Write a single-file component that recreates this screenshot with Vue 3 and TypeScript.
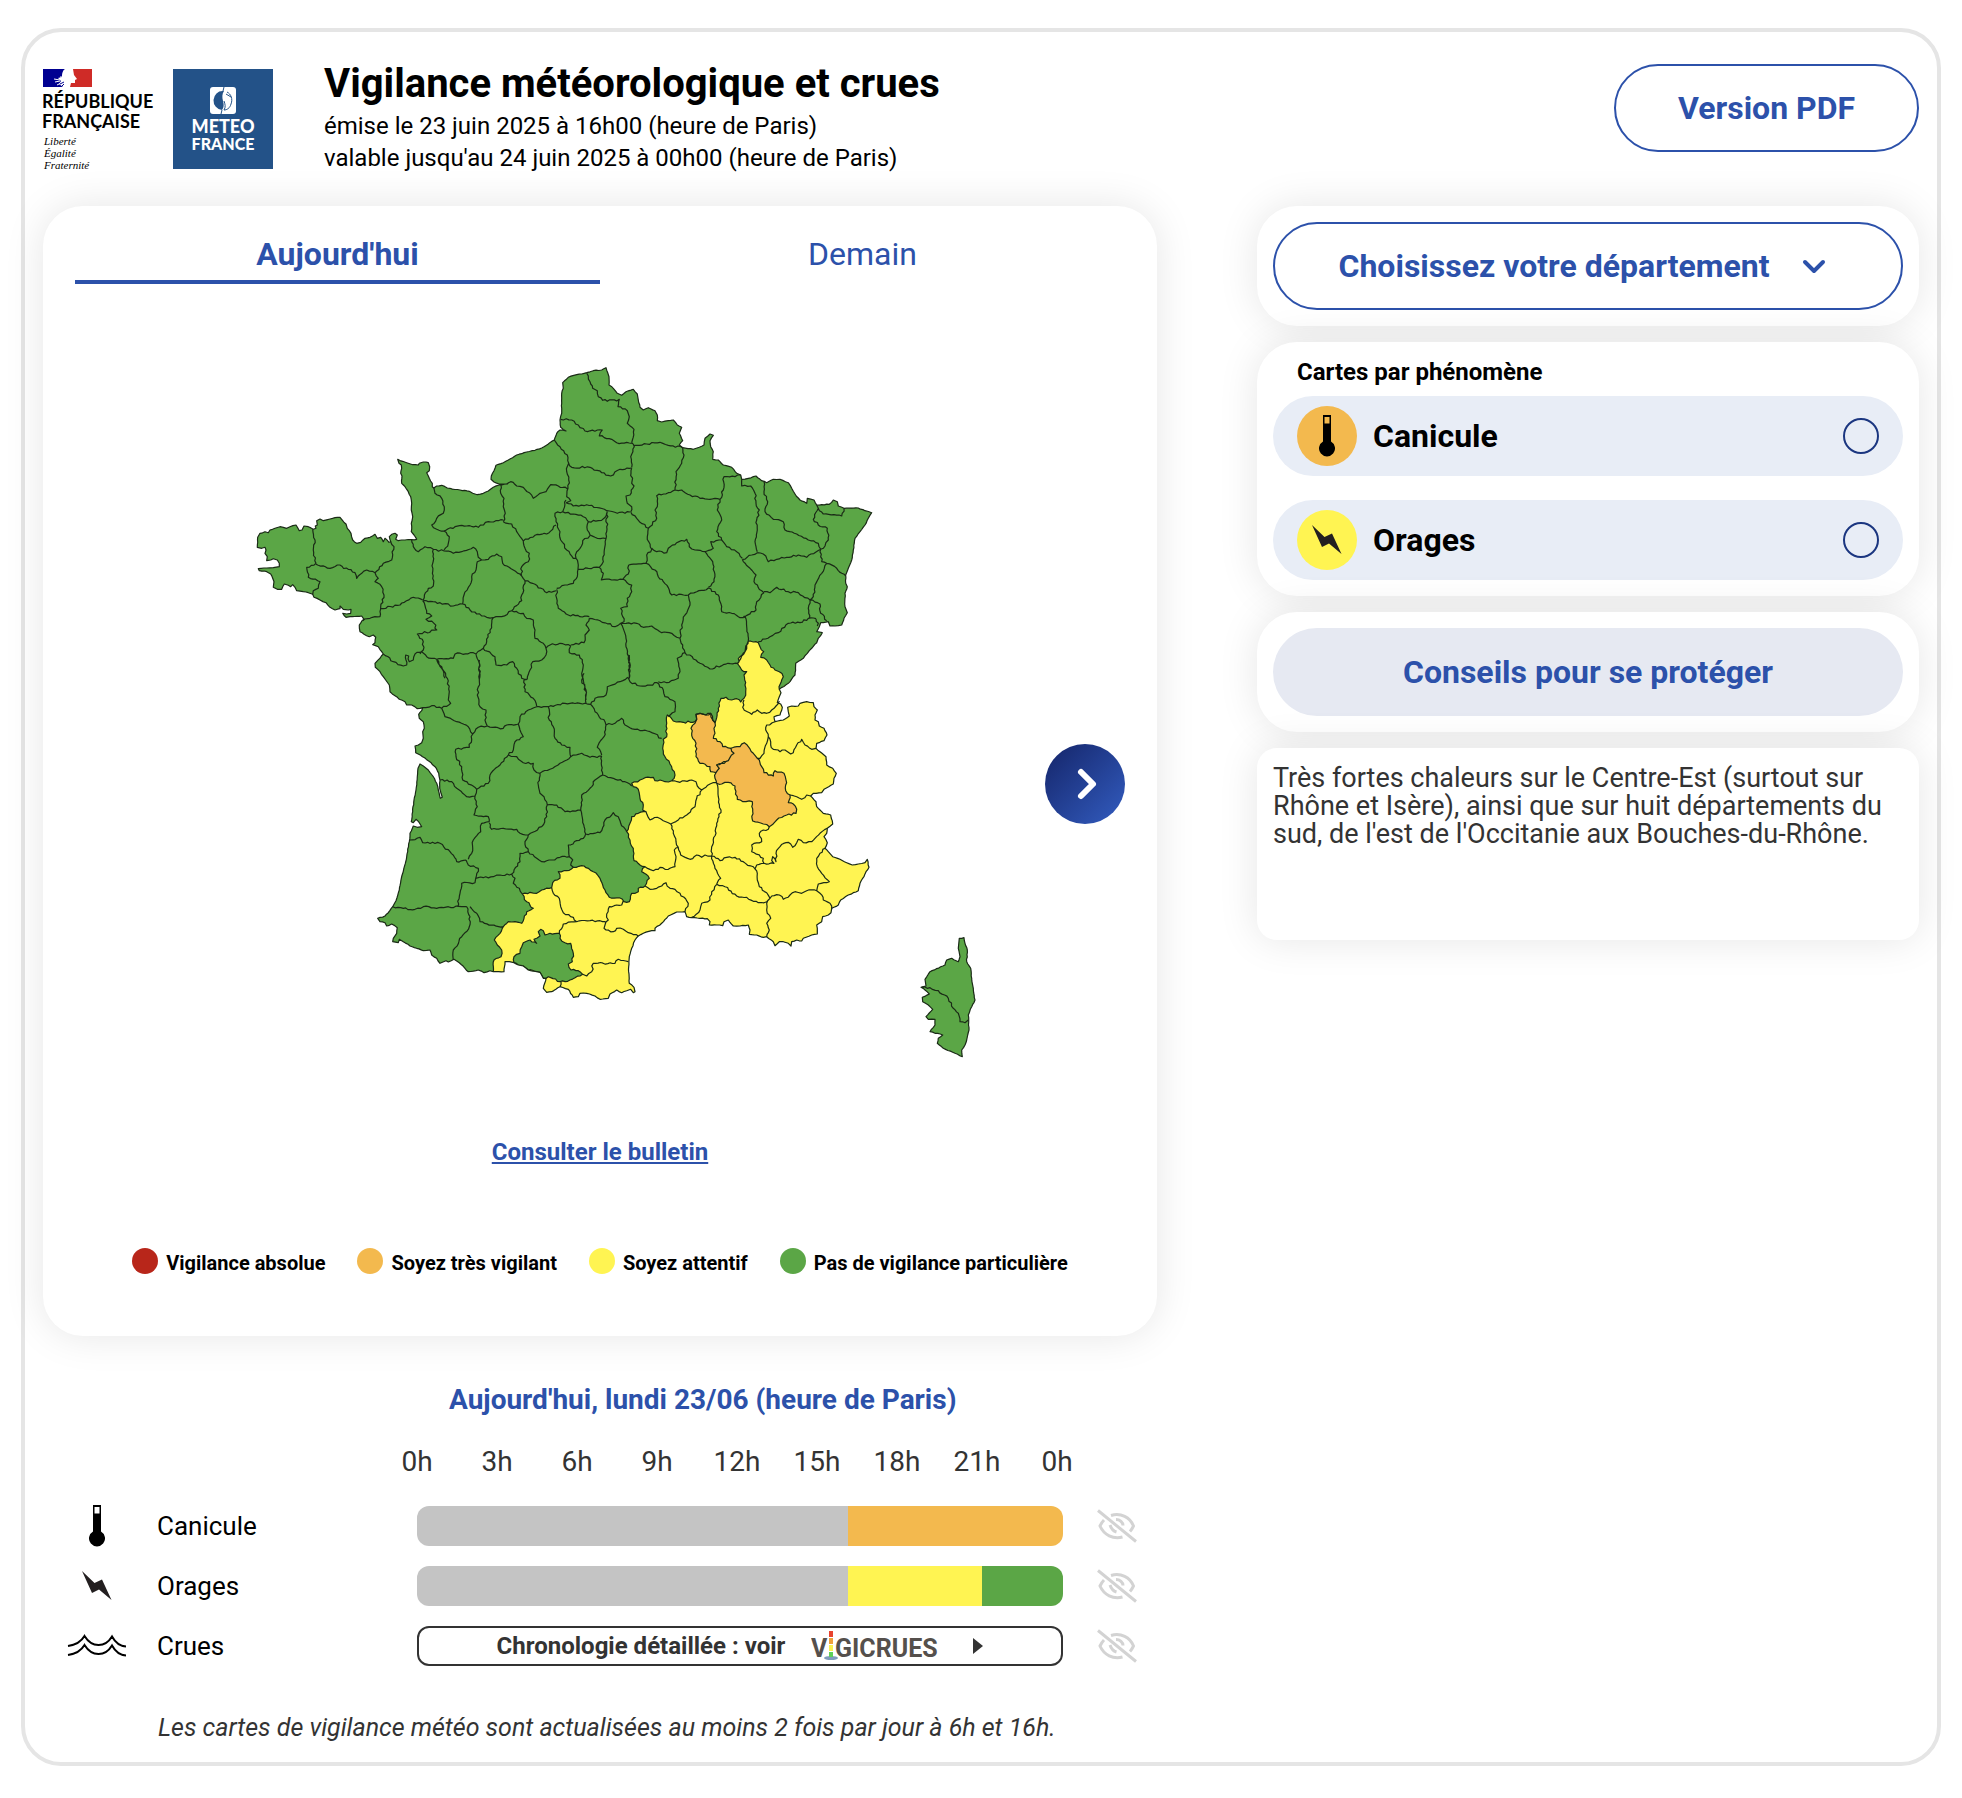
<script setup lang="ts">
import { ref } from 'vue'

type Point = [number, number]

/* ---------- Map geometry ----------
   The country is digitised on four overlapping sheets, at three units per map unit. */
const SHEETS: Record<string, Point> = {
  nw: [240, 350],
  ne: [540, 350],
  sw: [360, 660],
  se: [620, 620],
}

function noise(x: number, y: number): number {
  const n = Math.sin(x * 12.9898 + y * 78.233) * 43758.5453
  return (n - Math.floor(n)) * 2 - 1
}

/* Reads "x,y x,y …" from a sheet, and gives long segments the roughness of a natural border. */
function trace(sheet: string, data: string, rough = 3): Point[] {
  const [ox, oy] = SHEETS[sheet]
  const raw = data.trim().split(/\s+/).map((p) => p.split(',').map(Number) as Point)
  const out: Point[] = []
  raw.forEach(([x, y], i) => {
    out.push([ox + x / 3, oy + y / 3])
    const next = raw[i + 1]
    if (!next) return
    const dx = next[0] - x
    const dy = next[1] - y
    const length = Math.hypot(dx, dy)
    const steps = Math.floor(length / 7)
    for (let s = 1; s < steps; s++) {
      const t = s / steps
      const px = x + dx * t
      const py = y + dy * t
      const k = noise(px, py) * rough
      out.push([ox + (px - (dy / length) * k) / 3, oy + (py + (dx / length) * k) / 3])
    }
  })
  return out
}

function toPath(points: Point[], closed = false): string {
  return 'M' + points.map(([x, y]) => `${x.toFixed(1)},${y.toFixed(1)}`).join('L') + (closed ? 'Z' : '')
}

const coastNe = trace('ne', `43,270 50,250 60,240 78,243 62,232 60,210 65,190 65,130 70,115 68,98 85,82 110,74 140,68 160,62 185,60 198,53 203,68 207,80 207,105 220,115 232,130 245,136 258,125 280,118 292,132 295,150 300,172 310,180 325,173 345,182 352,195 352,212 365,216 385,212 400,210 412,225 425,232 418,250 428,272 418,285 428,293 460,298 478,292 492,285 495,265 510,252 520,256 510,272 512,290 520,305 518,328 535,330 550,345 575,352 590,370 602,375 605,388 625,385 648,378 665,392 680,398 700,388 720,388 745,398 755,415 765,432 780,450 800,460 802,445 822,450 830,465 868,463 880,450 892,455 895,468 912,475 955,474 975,482 995,488 985,505 975,525 960,545 945,565 940,600 935,630 925,655 917,675 917,700 922,710 915,730 915,770 922,788 912,805 905,825 885,828 870,828 865,815 842,818 838,830 830,845 847,848 835,865 830,878 815,895 802,910 790,925 767,940 765,975 745,1000 718,1018`, 1)
const coastNw = trace('nw', `943,270 925,282 905,294 885,301 860,306 830,315 805,330 790,338 768,346 762,362 754,378 753,388 762,396 778,402 800,402 778,405 760,412 745,423 730,430 712,434 698,430 688,424 660,420 622,414 605,406 590,408 581,414 577,410 577,400 568,385 560,368 568,362 569,350 565,338 550,336 538,340 535,345 518,344 500,338 488,334 473,328 477,340 484,345 485,355 482,370 486,378 485,400 495,410 505,425 512,440 515,460 514,480 518,500 514,520 514,545 522,555 530,568 515,569 495,570 475,572 467,568 472,555 465,550 455,553 448,560 452,575 447,577 435,565 430,575 422,562 412,565 405,553 390,562 375,565 362,577 350,580 338,570 333,550 322,535 318,522 308,512 300,502 285,503 270,507 250,512 240,507 230,512 232,525 226,528 228,535 220,538 205,530 192,528 186,540 178,542 168,525 150,530 140,535 120,530 105,535 90,540 85,548 75,545 60,550 53,562 52,592 65,595 75,592 78,600 75,610 82,620 80,632 92,630 100,626 112,630 118,640 118,650 100,653 80,654 55,656 58,662 80,665 92,672 98,685 102,695 100,712 112,718 125,718 133,702 145,706 152,710 158,704 165,712 170,722 190,725 205,728 218,733 222,742 240,750 258,758 270,772 285,780 300,776 300,768 310,778 325,780 333,778 332,790 320,792 308,790 318,802 330,800 365,798 372,808 366,812 358,825 360,845 372,853 388,860 400,855 407,862 405,878 398,884 415,890 425,905 430,912 420,925 405,940 406,952 420,965 430,980 437,990`, 1)
const coastSw = trace('sw', `77,60 88,75 90,95 105,107 118,118 135,125 140,135 155,135 172,146 188,143 185,152 176,163 178,175 190,185 193,205 188,215 190,235 185,248 175,255 165,258 167,278 182,286 205,302 225,320 236,340 240,362 239,385 243,400 247,412 241,415 235,390 230,370 220,350 205,330 190,318 180,312 174,325 172,350 168,390 162,420 158,455 154,485 160,488 168,478 178,488 185,500 172,502 160,498 150,520 148,545 140,590 128,640 118,690 108,722 98,740 85,758 75,768 53,775 60,785 75,788 80,798 95,792 112,803 110,820 100,835 98,845 115,848 118,838 130,845 150,858 170,865 190,872 210,870 215,885 230,895 240,910 258,902 265,906 282,898 298,908 315,925 325,935 355,930 372,938 390,932 400,935 432,935 435,905 448,905 462,908 475,915 490,918 505,930 540,937 550,955 558,955 550,985 560,997 575,995 600,980 625,988 640,1012 655,1010 660,1000 680,1000 705,1008 720,1018 745,1015 750,1002 770,990 785,998 800,992 812,988 820,998 825,995 822,982 808,970 806,920 808,890 815,865 825,840 835,828 850,820 875,812 885,812 885,805 905,790 925,768 950,756 975,755`, 1)
const coastSe = trace('se', `195,875 200,890 215,893 240,895 262,896 270,905 268,915 290,915 308,917 312,905 325,900 340,918 360,918 385,915 390,930 388,943 410,945 430,952 440,950 460,965 465,977 478,965 490,965 505,970 513,978 515,965 530,960 545,963 550,955 575,945 592,942 592,925 590,915 605,905 608,890 625,885 633,878 635,865 655,855 662,840 685,825 715,812 720,790 728,775 738,755 747,742 742,718 735,728 715,732 697,735 680,728 660,718 638,710 625,695 615,685 622,668 612,650 620,640 622,625 638,612 632,585 610,580 590,560 588,545 572,528 580,520 605,518 612,508 640,492 642,475 649,460 638,445 620,435 618,410 600,395 588,385 590,370 612,362 621,345 612,325 598,318 595,305 585,300 585,285 592,270 582,260 580,248 560,245 540,250 535,258 515,258 503,262 505,275 508,288 490,300 465,305 462,290 480,285 487,262 482,252 472,248 478,230 483,218 478,208`, 1)

const mainland = toPath([...coastNw, ...coastSw, ...coastSe, ...coastNe.slice().reverse()], true)

const corsica = toPath(trace('se', `1018,955 1032,953 1035,970 1042,990 1040,1025 1052,1045 1055,1075 1060,1105 1065,1140 1055,1160 1045,1185 1047,1230 1040,1260 1035,1275 1025,1290 1027,1310 1005,1300 970,1285 952,1270 955,1255 968,1245 930,1235 945,1215 945,1198 925,1198 918,1190 938,1168 925,1155 908,1145 907,1132 928,1122 915,1110 903,1102 918,1098 915,1078 930,1055 975,1035 980,1020 995,1015 1015,1025 1020,1010 1015,985`, 1), true)

/* Limit between the green departments and the south-eastern yellow block */
const frontNorth = trace('se', `478,208 485,180 490,170 478,155 465,150 450,135 440,120 422,112 431,95 420,80 415,68 400,66 385,63 380,75 375,95 360,110 352,130 365,150 380,155 372,165 375,195 377,215 372,235 362,246 350,236 335,240 318,232 303,235 295,265 288,300 285,308 278,300 272,280 258,285 240,280 228,283 230,298 225,305 190,307 178,305 160,303 152,292 142,285 140,310 140,350 130,358 128,385 135,410 150,432 163,455 165,465 155,482 135,485 120,480 105,482 100,472 75,473 60,480 35,490 40,500 55,508 60,535 70,555 68,570 78,575 55,580 35,590 30,610 20,635 30,660 40,685 42,722 60,735 75,740 65,755 88,775 75,798 55,805 55,815 35,820 28,845 12,845`)
const frontSouth = trace('sw', `790,722 785,716 748,712 735,690 728,675 720,655 700,635 685,625 665,617 640,622 620,632 595,635 600,655 578,668 575,683 545,690 530,700 510,697 487,702 500,725 520,745 500,755 492,775 485,790 465,785 445,785 430,800 420,820 403,840 412,855 425,870 423,890 402,900 400,935`)
const front = [...frontNorth, ...frontSouth]
const yellowArea = toPath([...front, [490, 1010], [770, 1010], [950, 900], [890, 750], [820, 660]], true)

const ariege = toPath(trace('sw', `598,820 600,835 615,848 632,850 640,880 637,905 625,912 633,930 655,932 668,943 630,960 600,965 565,950 550,955 540,937 505,930 490,918 475,915 462,908 462,890 480,880 485,860 490,848 510,840 530,850 522,838 540,828 535,815 542,808 550,812 555,825 570,820 598,820`), true)

const orangeAreas = [
  `228,283 240,280 258,285 272,280 278,300 285,308 282,325 285,340 280,355 300,365 308,380 333,385 342,400 325,422 305,430 290,435 298,445 288,458 272,455 270,440 240,430 228,410 228,370 218,355 213,325 225,310 230,298 228,283`,
  `373,368 385,380 400,400 412,415 425,440 432,458 460,468 465,452 492,460 498,480 497,512 510,525 505,548 520,552 530,568 528,580 500,585 470,600 448,620 430,612 398,603 397,545 378,545 352,538 345,498 325,487 305,492 290,490 285,475 288,458 298,445 290,435 305,430 325,422 342,400 333,385 360,380 373,368`,
].map((d) => toPath(trace('se', d), true))

const BORDERS: Record<string, string> = {
  nw: `800,403 812,395 830,408 850,412 868,428 880,445 900,430 918,425 932,404 955,408 982,416
783,405 782,430 792,445 790,470 796,490 790,515
581,412 585,430 605,445 613,470 610,490 590,505 575,525 590,538 612,543
612,543 645,530 680,528 715,532 745,515 790,510
612,543 628,560 625,580 612,600
515,569 520,590 535,605 555,590 580,598 612,603
612,603 640,610 665,605 700,592 712,605 715,622 725,630
725,630 745,628 770,612 785,620 788,640 820,660 845,678
790,515 815,522 830,545 850,573
850,573 885,556 920,552 948,525
850,573 855,595 868,610 865,635 845,650 845,678 855,692
580,598 578,640 580,708 565,715 550,750
725,630 712,635 708,660 695,680 690,705 672,735 668,762
550,752 600,758 640,768 668,762
668,762 690,780 710,792 740,802 760,803
760,803 785,800 815,782 845,752 845,735 855,700 855,692
855,692 885,703 920,728 948,722
218,538 225,570 220,600 228,640 200,652 205,682 240,695 235,715 220,722 218,733
228,643 270,655 292,645 325,658 345,668 350,685 365,670 380,660 405,668
452,575 462,590 455,630 430,640 405,668
405,668 415,685 405,695 425,710 432,735 422,770 420,800 390,805 368,812
422,775 480,765 520,742 548,750
548,752 560,790 575,798 558,808 582,820 590,840 532,852 550,875 550,900 540,912
430,912 460,935 490,948 500,945 497,915 506,918 508,935 520,930 525,912 545,905
545,905 560,920 590,928
590,928 640,925 645,912 700,908 708,912
760,803 750,840 740,875 730,895 708,912
815,782 850,790 860,805 880,810 885,840 885,865 910,880 918,895
918,895 918,915 905,930 878,935 870,960 862,988
730,895 765,920 768,945 800,945 818,935 830,955 845,985 862,988
918,895 930,885 960,880 992,888
590,928 605,955 615,985
708,912 718,940 718,988`,
  ne: `140,70 150,95 158,115 172,122 175,140 188,151 230,153 238,148 234,170 262,182 268,200 262,220 282,238 275,278
62,208 95,210 115,225 135,243 187,240 178,258 215,268 230,278 275,280
43,270 60,290 82,315 86,340
275,278 283,290 272,320 275,352
283,286 320,282 360,277 385,286 428,293
86,340 95,352 150,352 185,368 212,378 240,358 275,354
86,340 80,365 86,390 84,415 80,440 92,452 78,458
78,458 100,468 140,464 200,482 232,490 270,486
275,354 275,400 282,408 270,435 258,438 262,460 275,470 272,486
78,450 68,485 45,490 48,515
68,485 100,492 130,500 145,515
145,515 175,512 192,505 202,485
145,515 142,540 150,555 165,562 198,566
202,485 200,530 198,566
150,557 128,572 120,595 110,605 108,625
48,515 60,545 62,570 80,600 100,625 108,625 115,645 114,658
198,566 193,600 190,635 178,652
114,658 145,655 178,652
178,652 190,670 184,690 215,690 248,688 265,672 266,645
266,645 318,640 320,615 335,598 322,560 325,535
272,486 290,505 325,535
325,535 350,505 345,480 352,470 350,437 385,428 405,420
428,293 432,315 425,340 408,365 405,420
405,420 425,420 450,435 480,445 540,448
540,448 550,420 552,380 585,380 602,375
335,595 350,605 380,608 385,595 410,578 440,568 448,590 465,600 495,605
495,605 520,595 512,575 545,570
545,570 530,545 545,510 532,480 540,448
545,570 560,590 590,605 607,625
605,388 605,408 632,408 645,430 648,460 658,480 650,510 652,540 645,575 652,605
607,628 635,615 652,608
672,395 672,425 683,455 675,485 700,508 730,515 735,540 770,552 805,570 835,580 842,598
652,608 670,612 685,635 710,628 740,622 775,615 800,622 842,598
830,465 835,475 820,508 835,525 862,535 865,570 855,588 842,598
835,475 850,492 905,498 912,475
842,598 845,635 860,640 890,655 917,678
860,640 845,670 825,705 820,740 810,750
810,750 775,728 745,725 710,712 690,728 672,725
607,628 630,655 648,675 642,695 665,722 672,728
672,728 650,755 648,780 610,800
495,605 518,635 523,665 522,695 505,712
318,640 345,660 355,680 370,695 388,720 395,735 445,735
445,735 470,725 505,714
505,714 535,735 545,770 545,785 575,790 600,803 618,800
615,800 620,830 625,872
655,875 690,860 715,848 745,820 780,818 805,805 828,806
810,750 805,775 808,805
810,750 840,762 842,790 860,812
828,806 835,820 832,828
625,872 615,905 595,940
592,940 550,944 510,957 480,940 435,908
445,735 450,765 435,795 425,825 420,865
420,865 428,885 435,908
242,820 290,820 310,832 335,828 365,848 395,850 410,862 420,865
250,688 275,705 275,725 262,745 262,770 242,775 252,815 242,820
242,820 225,830 180,812 148,805
148,800 85,795 55,775 50,745 50,718
50,715 75,705 100,700 112,680 114,658
148,805 138,825 148,840 135,855 132,878 92,885
92,888 88,908 118,915 130,945 125,970 135,1010 138,1050
242,820 258,865 258,890 270,940 268,985
435,908 412,925 420,965 415,985 380,998 355,995`,
  sw: `230,0 245,20 262,55 268,95 265,120 272,130 245,145
188,143 215,137 245,145
358,58 352,105 360,140 378,150 375,180 382,198
358,0 358,58
245,145 255,170 290,185 325,200 338,222
338,222 355,202 382,198
382,198 430,205 440,195 475,192
502,58 492,60 495,95 520,115 530,138
475,192 480,170 505,150 530,140
530,140 565,140 615,130 660,130 692,133
672,40 665,60 678,90 678,130
692,133 705,115 738,105 742,80 780,65 803,52
808,-15 808,52
803,52 810,65 840,78 870,75 892,68
892,68 910,90 915,110 945,125 945,155 925,170
738,195 765,190 785,175 795,195 825,208 870,215 905,235
692,133 705,155 735,185 738,195
738,195 732,230 712,262 725,285
565,140 568,180 580,200 585,235 605,255 630,262 632,290
632,290 665,280 690,292 725,288
725,288 728,345
632,290 600,310 570,328 540,340
728,345 760,355 795,365 815,378
728,345 705,360 690,385 665,405 662,450
662,450 615,455 590,435 560,435
540,340 535,375 540,400 552,410 562,435
445,285 470,290 490,308 520,310 522,330 540,340
475,192 480,210 490,230 465,245 460,270 445,285
445,285 420,315 390,345 385,370 350,388
338,222 328,262 287,268 288,290 305,320 308,360 350,388
240,360 275,365 290,385 320,410 345,408
350,388 345,408 352,440 342,465 385,470 388,485
388,488 395,508 430,505 470,508 480,520 505,525
505,525 545,500 560,470 562,435
505,525 495,545 505,575
505,575 530,595 545,605 575,600 600,592 628,590
628,590 625,555 670,535 677,522
662,450 668,480 677,522
677,522 720,518 735,480 760,458 775,470 782,490 800,515
628,590 638,600 632,615 640,622
388,485 365,490 362,515 340,540 335,580 325,598
150,540 180,532 188,548 240,550 270,575 290,605 318,600
318,600 325,615 355,625 347,655
347,655 400,650 420,645 455,642
505,575 480,580 480,605 455,642
455,642 465,655 460,670 478,685 487,702
347,655 345,668 305,670 300,700 293,740
98,740 130,745 165,748 190,740 230,745 265,740 320,740
320,740 330,770 328,800 305,830 280,870 280,900
330,740 350,760 360,785 395,795 430,800
790,722 785,735 748,740 740,762 745,780 735,795 732,805 760,815 770,805 790,808 805,818 835,828
650,785 690,782 735,785 738,790
575,683 580,700 598,715 602,740 610,758 640,772 650,785
650,785 610,792 598,820
668,943 680,948 695,935 700,910 765,910 775,898 805,905
603,965 600,980`,
  se: `372,240 368,262 382,275 395,283 412,270 425,280 440,280 455,270 468,258 478,243
465,305 440,315 437,330 445,350 440,370 432,400 420,415 412,415
445,350 452,375 460,388 480,395 495,390 512,402 520,398 530,375 545,358 555,375 575,388 588,385
510,525 530,530 545,538 560,525 572,528
622,625 600,640 575,665 550,668 535,658 530,668 518,682 512,672 498,668 480,680 468,700 468,725 458,710 455,722 462,730 432,730
448,620 445,628 430,630 418,640 425,665 395,675 395,695 430,715 432,730 410,735 405,747
615,685 600,700 590,715 592,740 605,760 628,785 595,792 590,812
590,812 560,812 545,820 525,815 510,825 490,838 478,825 455,828 450,835
405,747 412,760 412,780 418,800 440,818 450,835
590,812 600,820 610,840 630,850 635,868
450,835 440,850 440,870 452,895 440,910 448,930 440,950
290,793 315,800 350,828 380,832 415,848 440,845 450,835
275,708 300,722 320,712 345,712 370,725 405,747
275,708 285,745 302,775 290,793 275,815 270,840 245,850 240,870 215,892
290,490 295,530 303,570 290,610 288,640 275,680 275,708
288,488 270,492 245,510
155,482 180,487 215,480 228,485 232,498 245,510
245,510 230,535 225,560 200,585 175,600 152,612
78,575 90,600 112,592 130,602 152,612
152,612 160,640 168,665 175,682
175,682 182,705 210,718 230,705 245,712 255,705 275,708
175,682 163,690 168,710 165,740 145,748 120,742 100,752 75,740
75,798 90,808 110,805 125,798 138,788 150,805 165,808 180,820 205,850 195,875
905,1102 930,1103 955,1112 985,1135 1000,1165 1015,1180 1020,1205 1035,1208 1045,1200`,
}

const borders = Object.entries(BORDERS)
  .flatMap(([sheet, lines]) => lines.split('\n').map((line) => toPath(trace(sheet, line))))
  .join('')
const frontLine = toPath(front)

/* ---------- Page data ---------- */
const COLORS = { red: '#b8261a', orange: '#f3b94e', yellow: '#fff452', green: '#5ba646', past: '#c4c4c4' }

const tabs = ["Aujourd'hui", 'Demain']
const activeTab = ref(0)
const phenomenon = ref('')
const department = ref('')

const legend = [
  { label: 'Vigilance absolue', color: COLORS.red },
  { label: 'Soyez très vigilant', color: COLORS.orange },
  { label: 'Soyez attentif', color: COLORS.yellow },
  { label: 'Pas de vigilance particulière', color: COLORS.green },
]
const phenomena = [
  { id: 'canicule', label: 'Canicule', color: COLORS.orange },
  { id: 'orages', label: 'Orages', color: COLORS.yellow },
]
const hours = ['0h', '3h', '6h', '9h', '12h', '15h', '18h', '21h', '0h']
const timelines = [
  { id: 'canicule', label: 'Canicule', parts: [{ h: 16, color: COLORS.past }, { h: 8, color: COLORS.orange }] },
  { id: 'orages', label: 'Orages', parts: [{ h: 16, color: COLORS.past }, { h: 5, color: COLORS.yellow }, { h: 3, color: COLORS.green }] },
  { id: 'crues', label: 'Crues', parts: [] },
]
</script>

<template>
  <main class="frame">
    <header class="top">
      <div class="logos">
        <svg class="logo-rf" viewBox="0 0 118 102" role="img" aria-label="République Française">
          <path fill="#000091" d="M0 0h22c-3 2-3 6-3 8l-4 1 3 3-2 3 4 3H0z" />
          <path fill="#cf2b27" d="M30 0h19v18H27l1-4 4 0 0-3 2-1-3-4z" />
          <path stroke="#fff" stroke-width="1" fill="none" d="M11 10l6 1M12 13l5-1M14 16l6-3M17 8l3 0" />
          <path stroke="#000091" stroke-width="1" fill="none" d="M17 15l4-2M19 17l2-2" />
          <text x="-1" y="39" class="rf-name">RÉPUBLIQUE</text>
          <text x="-1" y="59" class="rf-name">FRANÇAISE</text>
          <text x="1" y="76" class="rf-motto">Liberté</text>
          <text x="1" y="88" class="rf-motto">Égalité</text>
          <text x="1" y="100" class="rf-motto">Fraternité</text>
        </svg>
        <svg class="logo-mf" viewBox="0 0 100 100" role="img" aria-label="Météo France">
          <rect width="100" height="100" fill="#235288" />
          <rect x="37" y="18" width="26" height="27" rx="3" fill="#fff" />
          <path d="M50 22a9 9.500 0 0 0-1 19c2-3 2-5 1-9s-1-7 1-10z" fill="#235288" />
          <path d="M54 23c4 2 6 7 4 12-1 4-4 6-7 6 2-3 1-6 0-9M51 18l-1 4M49 41l-1 4M53 25l5 3" fill="none" stroke="#235288" stroke-width="1" />
          <text x="50" y="64" text-anchor="middle" class="mf-name">METEO</text>
          <text x="50" y="81" text-anchor="middle" class="mf-name mf-small">FRANCE</text>
        </svg>
      </div>
      <div class="heading">
        <h1>Vigilance météorologique et crues</h1>
        <p>émise le 23 juin 2025 à 16h00 (heure de Paris)</p>
        <p>valable jusqu'au 24 juin 2025 à 00h00 (heure de Paris)</p>
      </div>
      <button type="button" class="pill outline pdf">Version PDF</button>
    </header>

    <div class="columns">
      <div class="left">
        <section class="card map-card">
          <div class="tabs" role="tablist">
            <button
              v-for="(tab, i) in tabs"
              :key="tab"
              type="button"
              role="tab"
              class="tab"
              :class="{ active: activeTab === i }"
              :aria-selected="activeTab === i"
              @click="activeTab = i"
            >{{ tab }}</button>
          </div>
          <div class="stage">
            <svg class="map" viewBox="200 350 800 720" role="img" aria-label="Carte de vigilance">
              <defs>
                <clipPath id="land"><path :d="mainland" /></clipPath>
              </defs>
              <path :d="mainland" :fill="COLORS.green" />
              <path :d="corsica" :fill="COLORS.green" />
              <path :d="yellowArea" :fill="COLORS.yellow" clip-path="url(#land)" />
              <path :d="ariege" :fill="COLORS.green" class="line" clip-path="url(#land)" />
              <path v-for="d in orangeAreas" :key="d" :d="d" :fill="COLORS.orange" class="line" />
              <path :d="frontLine + borders" fill="none" class="line" />
              <path :d="mainland" fill="none" class="line" />
              <path :d="corsica" fill="none" class="line" />
            </svg>
            <a href="#bulletin" class="bulletin">Consulter le bulletin</a>
            <ul class="legend">
              <li v-for="item in legend" :key="item.label">
                <span class="dot" :style="{ background: item.color }"></span>
                <span class="legend-label">{{ item.label }}</span>
              </li>
            </ul>
            <button type="button" class="next" aria-label="Carte suivante" @click="activeTab = 1">
              <svg viewBox="0 0 80 80"><path d="M36 28l12 12-12 12" /></svg>
            </button>
          </div>
        </section>

        <section class="timeline">
          <h2>Aujourd'hui, lundi 23/06 (heure de Paris)</h2>
          <div class="hours">
            <span v-for="(hour, i) in hours" :key="i">{{ hour }}</span>
          </div>
          <div v-for="row in timelines" :key="row.id" class="row">
            <span class="row-icon">
              <svg v-if="row.id === 'canicule'" width="16" height="42" viewBox="0 0 16 42">
                <path fill-rule="evenodd" d="M4 0h8v26.500a8 8 0 1 1-8 0zM5.500 2v6.500h5V2z" />
              </svg>
              <svg v-else-if="row.id === 'orages'" width="30" height="30" viewBox="0 0 30 30">
                <path fill="#231f20" d="M0 0l12.500 12L20 8.500 29.500 29 17 18.500 10 22z" />
              </svg>
              <svg v-else width="60" height="24" viewBox="0 0 60 24" fill="none" stroke="#000" stroke-width="2">
                <path d="M1 12c7-1 13-4 16.500-10C25 14 38 14 45 2.500 48 8 52 12 59 12.500M1 21c7-1 13-4 16.500-10C25 23 38 23 45 11.500 48 17 52 21 59 21.500" />
              </svg>
            </span>
            <span class="row-label">{{ row.label }}</span>
            <div v-if="row.parts.length" class="bar">
              <span v-for="(part, i) in row.parts" :key="i" :style="{ width: (part.h / 24) * 100 + '%', background: part.color }"></span>
            </div>
            <a v-else href="#vigicrues" class="vigicrues">
              <span>Chronologie détaillée : voir</span>
              <svg class="vc-logo" width="128" height="32" viewBox="0 0 128 32" role="img" aria-label="Vigicrues">
                <ellipse cx="20" cy="28" rx="7" ry="2" fill="#7f9dbd" />
                <path fill="#e8432e" d="M18 1h4v6h-4z" />
                <path fill="#f0a13a" d="M18 8h4v6h-4z" />
                <path fill="#fbf04f" d="M18 15h4v6h-4z" />
                <path fill="#5fd05a" d="M18 22h4v5h-4z" />
                <text x="0" y="27" class="vc-text">V</text>
                <text x="24" y="27" class="vc-text">GICRUES</text>
              </svg>
              <svg width="10" height="16" viewBox="0 0 10 16"><path fill="#333" d="M0 0l10 8-10 8z" /></svg>
            </a>
            <button type="button" class="eye" :aria-label="'Afficher ' + row.label">
              <svg width="40" height="34" viewBox="0 0 40 34" fill="none" stroke="#d3d3d3" stroke-width="3">
                <path d="M1 1.500L39 32.500M14 6.500c10-3 19 2 22.500 10.500-1 2-2 4-3.500 5.500M7 11c-2 2-3 4-4 6 4 9 13 13.500 22.500 11" />
                <path d="M19 10.500c4 0 7 3 7 6M13 16c1 3 3 6 6.500 7" />
              </svg>
            </button>
          </div>
          <p class="note">Les cartes de vigilance météo sont actualisées au moins 2 fois par jour à 6h et 16h.</p>
        </section>
      </div>

      <aside class="right">
        <section class="card small">
          <label class="pill outline chooser">
            <select v-model="department" aria-label="Département">
              <option value="">Choisissez votre département</option>
              <option value="38">Isère</option>
              <option value="69">Rhône</option>
            </select>
            <svg width="32" height="32" viewBox="0 0 32 32"><path d="M7 12l9 9 9-9" /></svg>
          </label>
        </section>
        <section class="card small">
          <h3>Cartes par phénomène</h3>
          <div class="phenomena">
            <label v-for="item in phenomena" :key="item.id" class="phenomenon">
              <span class="badge" :style="{ background: item.color }">
                <svg v-if="item.id === 'canicule'" width="16" height="42" viewBox="0 0 16 42">
                  <path fill-rule="evenodd" d="M4 0h8v26.500a8 8 0 1 1-8 0zM5.500 2v6.500h5V2z" />
                </svg>
                <svg v-else width="30" height="30" viewBox="0 0 30 30">
                  <path fill="#231f20" d="M0 0l12.500 12L20 8.500 29.500 29 17 18.500 10 22z" />
                </svg>
              </span>
              <span class="phenomenon-label">{{ item.label }}</span>
              <input v-model="phenomenon" type="radio" name="phenomenon" :value="item.id" />
            </label>
          </div>
        </section>
        <section class="card small">
          <button type="button" class="pill filled">Conseils pour se protéger</button>
        </section>
        <section class="card small message">
          <p>Très fortes chaleurs sur le Centre-Est (surtout sur Rhône et Isère), ainsi que sur huit départements du sud, de l'est de l'Occitanie aux Bouches-du-Rhône.</p>
        </section>
      </aside>
    </div>
  </main>
</template>

<style>
body {
  background: #fff;
}
</style>

<style scoped>
* {
  box-sizing: border-box;
}
.frame {
  margin: 28px 21px 32px;
  padding: 32px 18px 20px;
  border: 4px solid #e5e5e5;
  border-radius: 40px;
  font-family: Roboto, 'Liberation Sans', sans-serif;
  color: #000;
}
h1,
h2,
h3,
p,
ul {
  margin: 0;
  padding: 0;
}
button {
  font-family: inherit;
  cursor: pointer;
}
.top {
  display: flex;
  align-items: flex-start;
  margin-bottom: 32px;
}
.logos {
  display: flex;
  gap: 12px;
  padding-top: 5px;
  margin-right: 51px;
}
.logo-rf {
  width: 118px;
  height: 102px;
}
.logo-mf {
  width: 100px;
  height: 100px;
}
.rf-name {
  font: 700 18px Lato, sans-serif;
}
.rf-motto {
  font: italic 11px 'Liberation Serif', serif;
}
.mf-name {
  font: 900 18px Lato, sans-serif;
  fill: #fff;
}
.mf-small {
  font-size: 16px;
}
.heading {
  flex: 1;
  font-size: 24px;
  line-height: 32px;
}
h1 {
  margin-bottom: 6px;
  font-size: 40px;
  line-height: 40px;
  font-weight: 700;
}
.pill {
  display: flex;
  align-items: center;
  justify-content: center;
  width: 100%;
  height: 88px;
  border-radius: 44px;
  font-size: 32px;
  font-weight: 700;
  color: #2c51aa;
}
.outline {
  background: #fff;
  border: 2px solid #2c51aa;
}
.filled {
  background: #e6e9f2;
  border: 0;
}
.pdf {
  width: 305px;
}
.columns {
  display: flex;
  align-items: flex-start;
  gap: 100px;
}
.left {
  flex: 1114;
  min-width: 0;
}
.right {
  flex: 662;
  min-width: 0;
  display: flex;
  flex-direction: column;
  gap: 16px;
}
.card {
  background: #fff;
  border-radius: 40px;
  box-shadow: 0 0 40px rgba(0, 0, 0, 0.1);
}
.map-card {
  padding: 22px 32px 52px;
}
.tabs {
  display: flex;
}
.tab {
  flex: 1;
  height: 56px;
  padding: 0;
  background: none;
  border: 0;
  border-bottom: 4px solid transparent;
  font-size: 32px;
  color: #2c51aa;
}
.tab.active {
  font-weight: 700;
  border-color: #2c51aa;
}
.stage {
  position: relative;
  display: flex;
  flex-direction: column;
  align-items: center;
  padding: 66px 0 10px;
}
.map {
  width: 100%;
  height: 720px;
}
.line {
  stroke: #1a2a16;
  stroke-width: 1.2;
  stroke-linejoin: round;
}
.bulletin {
  margin-top: 68px;
  font-size: 24px;
  line-height: 28px;
  font-weight: 700;
  color: #2c51aa;
}
.legend {
  display: flex;
  gap: 32px;
  margin-top: 82px;
  list-style: none;
}
.legend li {
  display: flex;
  align-items: center;
  gap: 8px;
  font-size: 20px;
  line-height: 22px;
  font-weight: 700;
}
.legend-label {
  padding-top: 4px;
}
.dot {
  width: 26px;
  height: 26px;
  border-radius: 50%;
}
.next {
  position: absolute;
  top: 50%;
  right: 0;
  width: 80px;
  height: 80px;
  margin-top: -40px;
  padding: 0;
  border: 0;
  border-radius: 50%;
  background: linear-gradient(135deg, #192d76 15%, #2e54b3 85%);
}
.next path,
.chooser path {
  fill: none;
  stroke: #fff;
  stroke-width: 6;
  stroke-linecap: round;
  stroke-linejoin: round;
}
.chooser path {
  stroke: #2c51aa;
  stroke-width: 4;
}
.timeline {
  padding-top: 48px;
}
.timeline h2 {
  margin-left: 406px;
  font-size: 28px;
  line-height: 32px;
  font-weight: 700;
  color: #2c51aa;
}
.hours {
  display: flex;
  margin: 30px 60px 28px 334px;
  font-size: 28px;
  line-height: 32px;
  color: #333;
}
.hours span {
  flex: 1;
  text-align: center;
}
.row {
  display: grid;
  grid-template-columns: 108px 266px 1fr 94px;
  grid-template-rows: 40px;
  align-items: center;
  margin-bottom: 20px;
}
.row-icon {
  display: flex;
  justify-content: center;
}
.row-label {
  padding-left: 6px;
  font-size: 26px;
}
.bar {
  display: flex;
  height: 40px;
  border-radius: 12px;
  overflow: hidden;
}
.vigicrues {
  display: flex;
  align-items: center;
  justify-content: center;
  height: 40px;
  border: 2px solid #333;
  border-radius: 12px;
  font-size: 24px;
  line-height: 32px;
  font-weight: 700;
  color: #333;
  text-decoration: none;
}
.vc-logo {
  margin: 0 34px 0 26px;
}
.vc-text {
  font: 700 25px Roboto, sans-serif;
  fill: #55504c;
}
.eye {
  display: flex;
  justify-content: center;
  margin-left: 34px;
  width: 40px;
  padding: 0;
  background: none;
  border: 0;
}
.note {
  margin: 48px 0 0 115px;
  font-size: 25px;
  line-height: 28px;
  font-style: italic;
  color: #333;
}
.small {
  padding: 16px;
}
.chooser {
  gap: 28px;
  cursor: pointer;
}
.chooser select {
  appearance: none;
  padding: 0;
  border: 0;
  background: none;
  font: inherit;
  color: inherit;
}
.chooser svg {
  margin-right: 8px;
}
h3 {
  margin: 0 24px 10px;
  font-size: 24px;
  line-height: 28px;
  font-weight: 700;
}
.phenomena {
  display: flex;
  flex-direction: column;
  gap: 24px;
}
.phenomenon {
  display: flex;
  align-items: center;
  gap: 16px;
  height: 80px;
  padding: 0 24px;
  border-radius: 40px;
  background: #e8edf6;
  font-size: 32px;
  font-weight: 700;
  cursor: pointer;
}
.badge {
  display: flex;
  align-items: center;
  justify-content: center;
  width: 60px;
  height: 60px;
  border-radius: 50%;
}
.phenomenon-label {
  flex: 1;
}
.phenomenon input {
  appearance: none;
  width: 36px;
  height: 36px;
  margin: 0;
  border: 2px solid #1b3680;
  border-radius: 50%;
}
.phenomenon input:checked {
  background: #1b3680;
}
.message {
  min-height: 192px;
  border-radius: 20px;
  font-size: 27px;
  line-height: 28px;
  color: #333;
}
</style>
